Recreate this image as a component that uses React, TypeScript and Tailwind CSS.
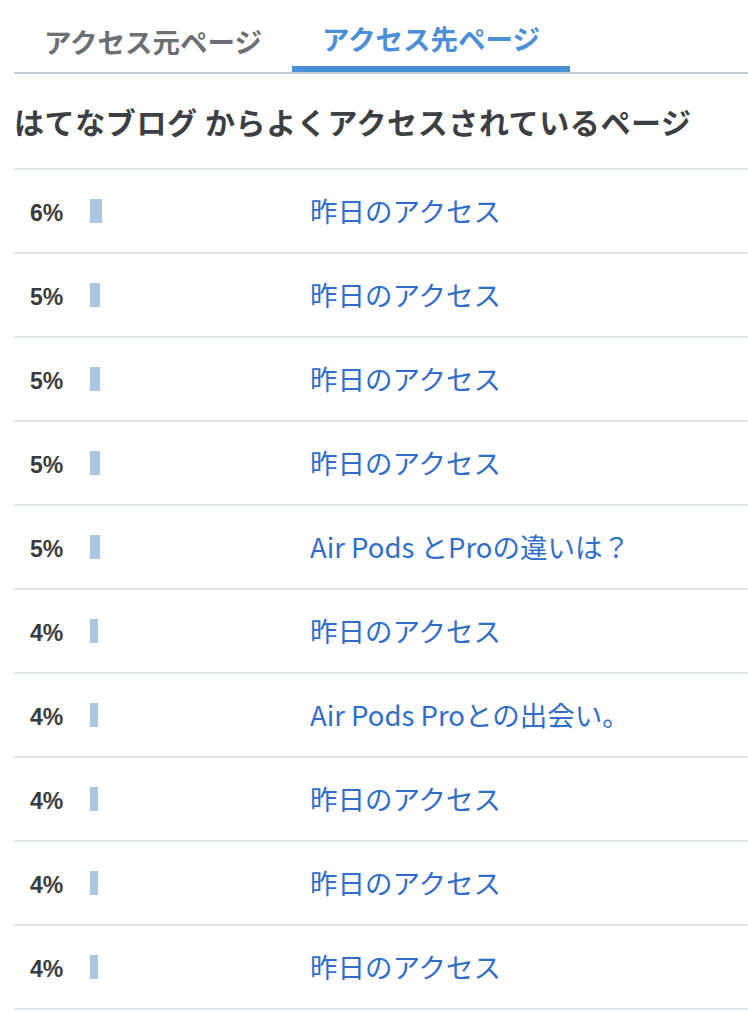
const rows = [
  { pct: 6, title: "昨日のアクセス" },
  { pct: 5, title: "昨日のアクセス" },
  { pct: 5, title: "昨日のアクセス" },
  { pct: 5, title: "昨日のアクセス" },
  { pct: 5, title: "Air Pods とProの違いは？" },
  { pct: 4, title: "昨日のアクセス" },
  { pct: 4, title: "Air Pods Proとの出会い。" },
  { pct: 4, title: "昨日のアクセス" },
  { pct: 4, title: "昨日のアクセス" },
  { pct: 4, title: "昨日のアクセス" },
];

const jp = "font-['Hiragino_Sans','Noto_Sans_CJK_JP',sans-serif]";

export default function App() {
  return (
    <div className={`bg-white min-h-[1012px] pl-[14px] ${jp}`}>
      {/* tabs */}
      <div className="flex border-b-2 border-[#c3ced8]">
        <button className="w-[278px] h-[72px] pt-[10px] text-[27.5px] leading-[40px] font-bold text-[#6c7075] text-center">
          アクセス元ページ
        </button>
        <button className="w-[278px] h-[72px] pt-[10px] text-[27.5px] leading-[40px] font-bold text-[#4a90d9] text-center border-b-[6px] border-[#4a90d9]">
          アクセス先ページ
        </button>
      </div>

      <h2 className="mt-[24px] mb-[24px] text-[30px] leading-[46px] font-bold text-[#3c3f43] tracking-[0.6px]">
        はてなブログ からよくアクセスされているページ
      </h2>

      <div className="border-b-2 border-[#e0e5e9]">
        {rows.map((r, i) => (
          <div
            key={i}
            className="grid grid-cols-[60px_220px_1fr] items-center h-[84px] border-t-2 border-[#e0e5e9] pl-[16px]"
          >
            <span className="mt-[5px] font-['Liberation_Sans',Arial,sans-serif] font-bold text-[23px] text-[#3a3b3d]">
              {r.pct}%
            </span>
            <span className="flex items-center">
              <span
                className="block h-[24px] bg-[#abc7e5]"
                style={{ width: r.pct * 2 }}
              />
            </span>
            <a href="#" className="mb-[3px] text-[27.5px] leading-[40px] text-[#2f6fcb] whitespace-nowrap">
              {r.title}
            </a>
          </div>
        ))}
      </div>
    </div>
  );
}
